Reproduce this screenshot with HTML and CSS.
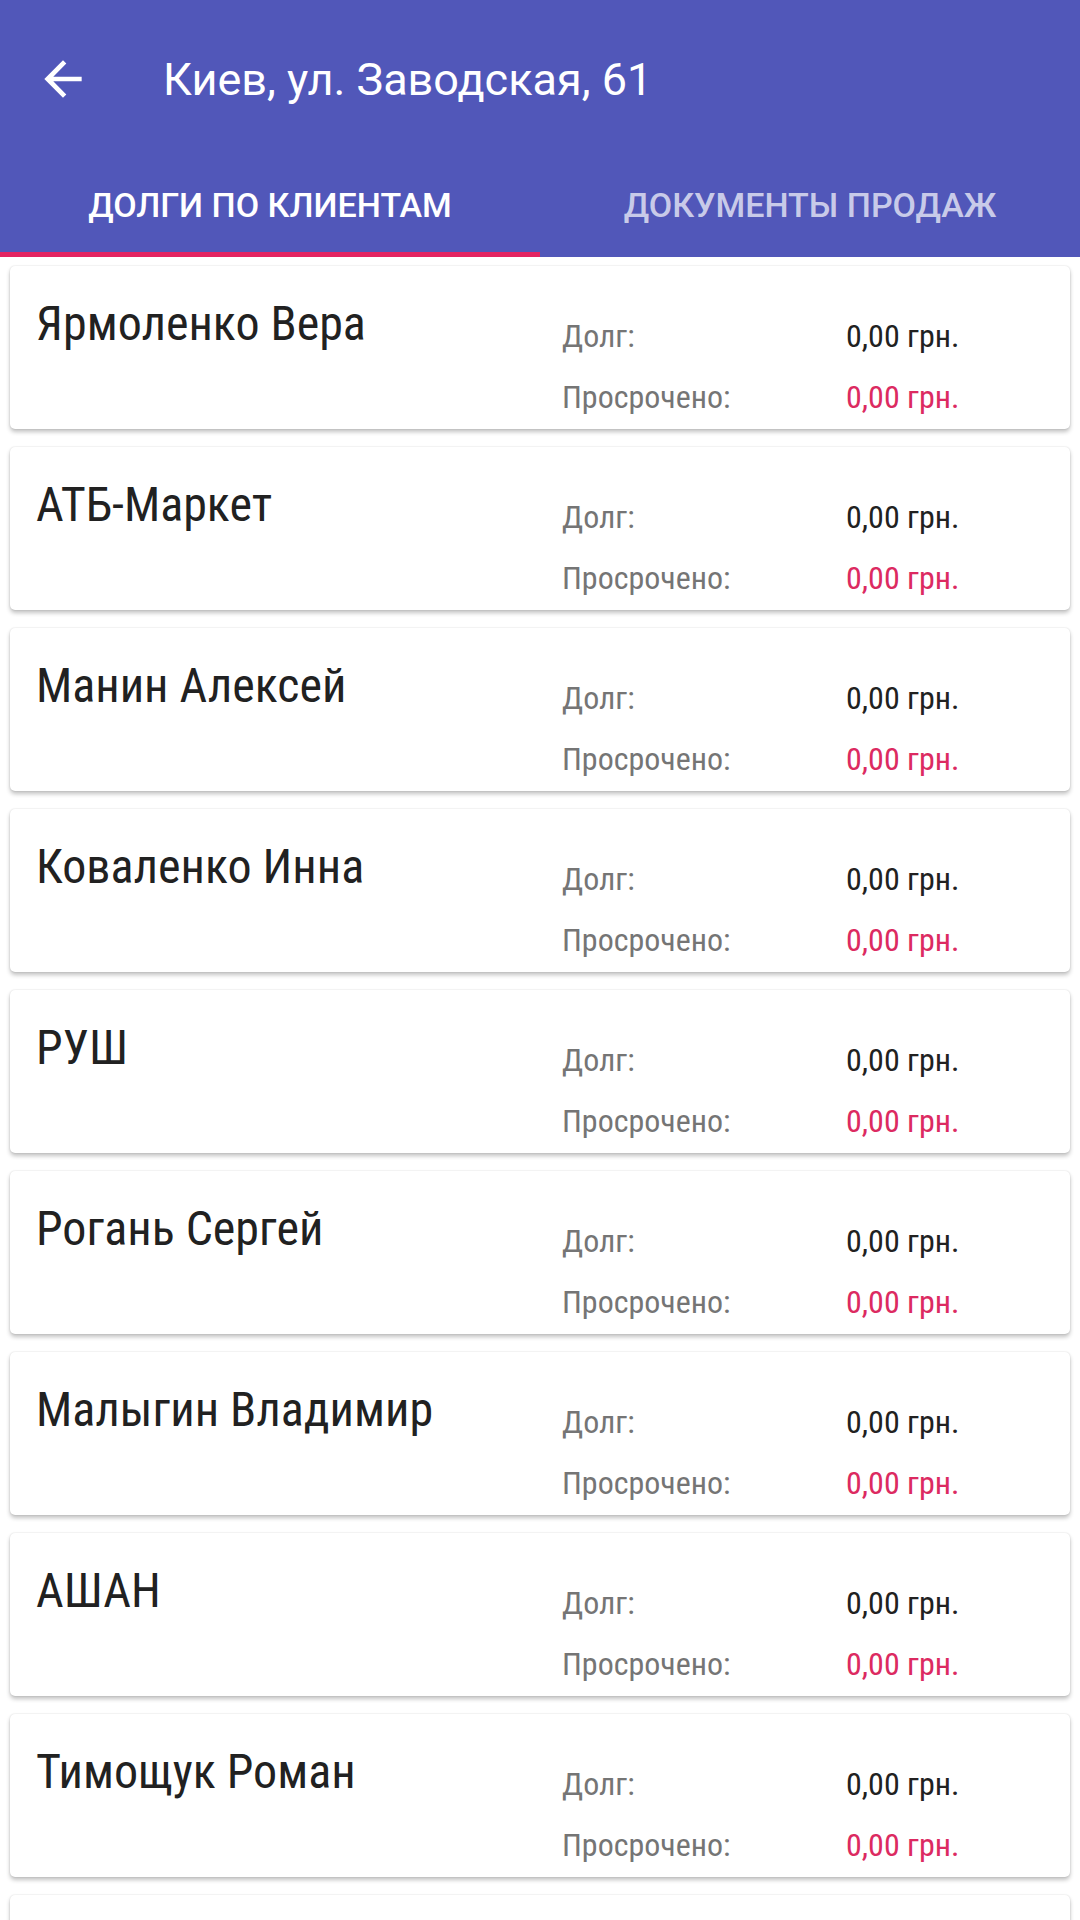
FILE: index.html
```html
<!DOCTYPE html>
<html lang="ru">
  <head>
    <meta charset="utf-8">
    <title>Долги по клиентам</title>
    <link rel="stylesheet" href="styles.css">
  </head>
  <body>
    <div id="app-bar">
      <div id="toolbar">
        <div id="back-icon">
          <svg viewBox="0 0 24 24" width="56" height="56">
            <path d="M20 11H7.83l5.59-5.59L12 4l-8 8 8 8 1.41-1.41L7.83 13H20v-2z" fill="white"/>
          </svg>
        </div>
        <div id="title">Киев, ул. Заводская, 61</div>
      </div>
      <div id="tabs">
        <div class="tab active">ДОЛГИ ПО КЛИЕНТАМ</div>
        <div class="tab">ДОКУМЕНТЫ ПРОДАЖ</div>
      </div>
    </div>

    <div id="client-list">
      <div class="card">
        <div class="client-name">Ярмоленко Вера</div>
        <div class="amounts">
          <span class="label">Долг:</span><span class="value">0,00 грн.</span>
          <span class="label">Просрочено:</span><span class="value overdue">0,00 грн.</span>
        </div>
      </div>
      <div class="card">
        <div class="client-name">АТБ-Маркет</div>
        <div class="amounts">
          <span class="label">Долг:</span><span class="value">0,00 грн.</span>
          <span class="label">Просрочено:</span><span class="value overdue">0,00 грн.</span>
        </div>
      </div>
      <div class="card">
        <div class="client-name">Манин Алексей</div>
        <div class="amounts">
          <span class="label">Долг:</span><span class="value">0,00 грн.</span>
          <span class="label">Просрочено:</span><span class="value overdue">0,00 грн.</span>
        </div>
      </div>
      <div class="card">
        <div class="client-name">Коваленко Инна</div>
        <div class="amounts">
          <span class="label">Долг:</span><span class="value">0,00 грн.</span>
          <span class="label">Просрочено:</span><span class="value overdue">0,00 грн.</span>
        </div>
      </div>
      <div class="card">
        <div class="client-name">РУШ</div>
        <div class="amounts">
          <span class="label">Долг:</span><span class="value">0,00 грн.</span>
          <span class="label">Просрочено:</span><span class="value overdue">0,00 грн.</span>
        </div>
      </div>
      <div class="card">
        <div class="client-name">Рогань Сергей</div>
        <div class="amounts">
          <span class="label">Долг:</span><span class="value">0,00 грн.</span>
          <span class="label">Просрочено:</span><span class="value overdue">0,00 грн.</span>
        </div>
      </div>
      <div class="card">
        <div class="client-name">Малыгин Владимир</div>
        <div class="amounts">
          <span class="label">Долг:</span><span class="value">0,00 грн.</span>
          <span class="label">Просрочено:</span><span class="value overdue">0,00 грн.</span>
        </div>
      </div>
      <div class="card">
        <div class="client-name">АШАН</div>
        <div class="amounts">
          <span class="label">Долг:</span><span class="value">0,00 грн.</span>
          <span class="label">Просрочено:</span><span class="value overdue">0,00 грн.</span>
        </div>
      </div>
      <div class="card">
        <div class="client-name">Тимощук Роман</div>
        <div class="amounts">
          <span class="label">Долг:</span><span class="value">0,00 грн.</span>
          <span class="label">Просрочено:</span><span class="value overdue">0,00 грн.</span>
        </div>
      </div>
      <!-- next card is scrolled below the fold -->
      <div class="card empty"></div>
    </div>
  </body>
</html>
```

FILE: styles.css
```css
body {
  margin: 0;
  background: #fff;
  font-family: Roboto, "Noto Sans", sans-serif;
  overflow: hidden;
}
#app-bar {
  background: #5157b9;
  color: white;
}
#toolbar {
  display: flex;
  align-items: center;
  height: 158px;
  padding-left: 35px;
}
#back-icon {
  display: flex;
  width: 56px;
  height: 56px;
  margin-right: 72px;
}
#title {
  font-size: 45px;
  font-weight: 400;
}
#tabs {
  display: flex;
  height: 99px;
}
.tab {
  flex: 1;
  display: flex;
  align-items: center;
  justify-content: center;
  font-size: 34px;
  font-weight: 500;
  color: rgba(255, 255, 255, 0.7);
  border-bottom: 5px solid transparent;
}
.tab.active {
  color: white;
  border-bottom-color: #e32461;
}
#client-list {
  display: flex;
  flex-direction: column;
  gap: 18px;
  padding: 9px 10px;
}
.card {
  display: flex;
  background: white;
  border-radius: 5px;
  padding-left: 26px;
  box-shadow: 0 3px 4px rgba(0, 0, 0, 0.24), 0 0 2px rgba(0, 0, 0, 0.14);
  font-family: "Roboto Condensed", "Liberation Sans Narrow", Roboto, sans-serif;
  font-stretch: condensed;
}
.card.empty {
  height: 163px;
}
.client-name {
  flex: 0 0 526px;
  padding-top: 30px;
  font-size: 48px;
  line-height: 56px;
  color: #212121;
}
.amounts {
  display: grid;
  grid-template-columns: 284px auto;
  grid-auto-rows: 61px;
  padding: 40px 0 1px;
  font-size: 32px;
  line-height: 61px;
}
.label {
  color: #757575;
}
.value {
  color: #212121;
}
.value.overdue {
  color: #dc2a61;
}
```
